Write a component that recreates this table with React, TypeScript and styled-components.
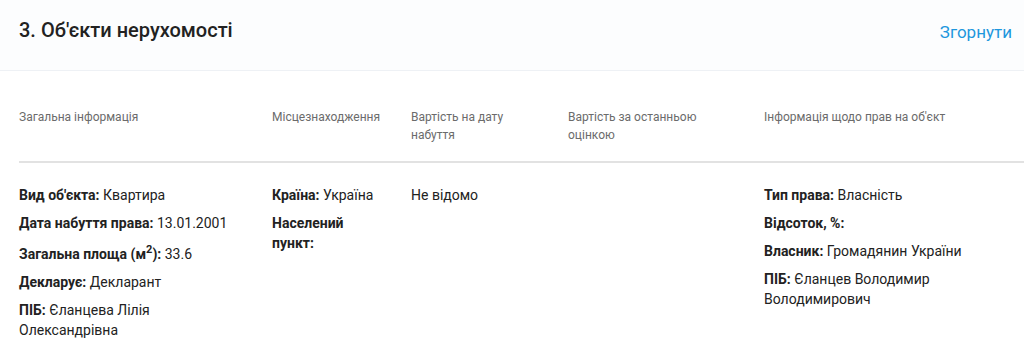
import React from "react";
import styled, { createGlobalStyle } from "styled-components";

const GlobalStyle = createGlobalStyle`
  body {
    margin: 0;
    background: #fff;
    font-family: Roboto, "Liberation Sans", Arial, sans-serif;
    color: #222;
  }
`;

type Field = { label?: React.ReactNode; value?: string; tall?: boolean };

const columns: { title: string; fields: Field[] }[] = [
  {
    title: "Загальна інформація",
    fields: [
      { label: "Вид об'єкта:", value: "Квартира" },
      { label: "Дата набуття права:", value: "13.01.2001" },
      {
        label: (
          <>
            Загальна площа (м<sup>2</sup>):
          </>
        ),
        value: "33.6",
        tall: true,
      },
      { label: "Декларує:", value: "Декларант" },
      { label: "ПІБ:", value: "Єланцева Лілія Олександрівна" },
    ],
  },
  {
    title: "Місцезнаходження",
    fields: [
      { label: "Країна:", value: "Україна" },
      { label: "Населений пункт:" },
    ],
  },
  {
    title: "Вартість на дату набуття",
    fields: [{ value: "Не відомо" }],
  },
  {
    title: "Вартість за останньою оцінкою",
    fields: [],
  },
  {
    title: "Інформація щодо прав на об'єкт",
    fields: [
      { label: "Тип права:", value: "Власність" },
      { label: "Відсоток, %:" },
      { label: "Власник:", value: "Громадянин України" },
      { label: "ПІБ:", value: "Єланцев Володимир Володимирович" },
    ],
  },
];

const App = () => {
  return (
    <Section>
      <GlobalStyle />
      <Header>
        <Title>3. Об'єкти нерухомості</Title>
        <Toggle>Згорнути</Toggle>
      </Header>
      <Table>
        <HeadRow>
          {columns.map((col) => (
            <HeadCell key={col.title}>{col.title}</HeadCell>
          ))}
        </HeadRow>
        <BodyRow>
          {columns.map((col) => (
            <Cell key={col.title}>
              {col.fields.map((f, i) => (
                <Item key={i} $tall={f.tall}>
                  {f.label && <Label>{f.label}</Label>}
                  {f.label && f.value ? " " : null}
                  {f.value}
                </Item>
              ))}
            </Cell>
          ))}
        </BodyRow>
      </Table>
    </Section>
  );
};

const Section = styled.div`
  width: 1024px;
  min-height: 363px;
  background: #fff;
`;

const Header = styled.div`
  display: flex;
  align-items: center;
  justify-content: space-between;
  height: 71px;
  padding: 0 12px 10px 19px;
  box-sizing: border-box;
  background: #fcfdfe;
  border-bottom: 1px solid #eef1f5;
`;

const Title = styled.h2`
  margin: 0;
  font-size: 20px;
  font-weight: 500;
  color: #222;
`;

const Toggle = styled.a`
  font-size: 17px;
  color: #1e97dd;
  cursor: pointer;
  margin-top: 4px;
`;

const Table = styled.div`
  margin-left: 19px;
`;

const grid = `
  display: grid;
  grid-template-columns: 253px 139px 157px 196px 1fr;
`;

const HeadRow = styled.div`
  ${grid}
  padding: 37px 0 17px;
  border-bottom: 2px solid #e2e2e2;
`;

const HeadCell = styled.div`
  padding-right: 24px;
  font-size: 12px;
  line-height: 18px;
  color: #6b6b6b;
`;

const BodyRow = styled.div`
  ${grid}
  padding-top: 22px;
`;

const Cell = styled.div`
  padding-right: 24px;
  font-size: 14px;
  line-height: 20px;
  color: #222;
`;

const Item = styled.div<{ $tall?: boolean }>`
  margin-bottom: 8px;
  padding-top: ${(p) => (p.$tall ? "3px" : "0")};

  sup {
    font-size: 11px;
    line-height: 1;
  }
`;

const Label = styled.b`
  font-weight: 700;
`;

export default App;
